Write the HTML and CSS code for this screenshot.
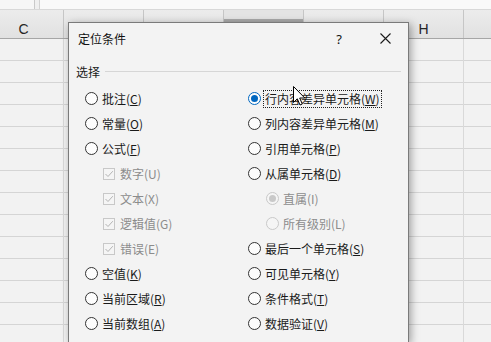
FILE: index.html
```html
<!DOCTYPE html>
<html lang="zh-CN">
<head>
<meta charset="utf-8">
<title>定位条件</title>
<link rel="stylesheet" href="styles.css">
</head>
<body>
<div class="sheet">
  <div class="formula"><span class="namebox"></span><span class="fxsep"></span><span class="fxrest"></span></div>
  <div class="colhead">
    <div class="col">C</div>
    <div class="col"></div>
    <div class="col"></div>
    <div class="col sel"></div>
    <div class="col"></div>
    <div class="col">H</div>
    <div class="col"></div>
  </div>
  <div class="grid">
    <div class="gcol"></div><div class="gcol"></div><div class="gcol"></div><div class="gcol"></div><div class="gcol"></div><div class="gcol"></div><div class="gcol"></div>
  </div>
</div>

<div class="dialog">
  <div class="titlebar">
    <span class="title">定位条件</span>
    <span class="tbtn help">?</span>
    <span class="tbtn close"><svg width="11" height="11" viewBox="0 0 11 11"><path d="M0.5 0.5 L10.5 10.5 M10.5 0.5 L0.5 10.5" stroke="#1a1a1a" stroke-width="1.1" fill="none"/></svg></span>
  </div>
  <div class="grouphead"><span>选择</span><span class="gline"></span></div>
  <div class="options">
    <label class="opt"><span class="radio"></span>批注(<u>C</u>)</label>
    <label class="opt"><span class="radio on"></span><span class="focus">行内容差异单元格(<u>W</u>)</span></label>

    <label class="opt"><span class="radio"></span>常量(<u>O</u>)</label>
    <label class="opt"><span class="radio"></span>列内容差异单元格(<u>M</u>)</label>

    <label class="opt"><span class="radio"></span>公式(<u>F</u>)</label>
    <label class="opt"><span class="radio"></span>引用单元格(<u>P</u>)</label>

    <label class="opt sub dis"><span class="cb"><svg width="10" height="10" viewBox="0 0 10 10"><path d="M1.5 5 L4 7.5 L8.8 2.2" stroke="#b4b4b4" stroke-width="1" fill="none"/></svg></span>数字(U)</label>
    <label class="opt"><span class="radio"></span>从属单元格(<u>D</u>)</label>

    <label class="opt sub dis"><span class="cb"><svg width="10" height="10" viewBox="0 0 10 10"><path d="M1.5 5 L4 7.5 L8.8 2.2" stroke="#b4b4b4" stroke-width="1" fill="none"/></svg></span>文本(X)</label>
    <label class="opt sub dis"><span class="radio on"></span>直属(I)</label>

    <label class="opt sub dis"><span class="cb"><svg width="10" height="10" viewBox="0 0 10 10"><path d="M1.5 5 L4 7.5 L8.8 2.2" stroke="#b4b4b4" stroke-width="1" fill="none"/></svg></span>逻辑值(G)</label>
    <label class="opt sub dis"><span class="radio"></span>所有级别(L)</label>

    <label class="opt sub dis"><span class="cb"><svg width="10" height="10" viewBox="0 0 10 10"><path d="M1.5 5 L4 7.5 L8.8 2.2" stroke="#b4b4b4" stroke-width="1" fill="none"/></svg></span>错误(E)</label>
    <label class="opt"><span class="radio"></span>最后一个单元格(<u>S</u>)</label>

    <label class="opt"><span class="radio"></span>空值(<u>K</u>)</label>
    <label class="opt"><span class="radio"></span>可见单元格(<u>Y</u>)</label>

    <label class="opt"><span class="radio"></span>当前区域(<u>R</u>)</label>
    <label class="opt"><span class="radio"></span>条件格式(<u>T</u>)</label>

    <label class="opt"><span class="radio"></span>当前数组(<u>A</u>)</label>
    <label class="opt"><span class="radio"></span>数据验证(<u>V</u>)</label>
  </div>
</div>

<svg class="cursor" width="13" height="20" viewBox="0 0 13 20"><path d="M0.5 0.5 L0.5 16.5 L4.3 12.8 L7 19 L9.3 18 L6.7 12 L11.8 12 Z" fill="#fff" stroke="#000" stroke-width="1"/></svg>
</body>
</html>
```

FILE: styles.css
```css
* { box-sizing: border-box; }
html, body { margin: 0; padding: 0; }
body {
  width: 491px;
  height: 342px;
  overflow: hidden;
  position: relative;
  background: #f2f2f2;
  font-family: "Noto Sans CJK SC", "Noto Sans", sans-serif;
  font-size: 12px;
  color: #1a1a1a;
}

/* spreadsheet behind */
.sheet { overflow: hidden; height: 342px; }
.formula {
  height: 9px;
  display: flex;
  background: #f6f6f6;
}
.namebox { width: 35px; border-right: 1px solid #c9c9c9; }
.fxsep { width: 5px; border-right: 1px solid #d2d2d2; background: #efefef; }
.fxrest { flex: 1; background: #f9f9f9; }

.colhead {
  height: 30px;
  display: flex;
  margin-left: -16px;
  background: linear-gradient(#ececec, #e1e1e1);
  border-top: 1px solid #d8d8d8;
  border-bottom: 1px solid #a6a6a6;
}
.col {
  width: 80px;
  flex: none;
  border-right: 1px solid #c6c6c6;
  display: flex;
  justify-content: center;
  align-items: flex-end;
  padding-bottom: 0;
  line-height: 18px;
  font-family: "Liberation Sans", Arial, sans-serif;
  font-size: 14px;
  color: #262626;
}
.col.sel {
  background: linear-gradient(to bottom, #e4e4e4 0 9px, #a9a9a9 9px 12px, #d0d0d0 12px);
}

.grid {
  height: 303px;
  display: flex;
  margin-left: -16px;
  background: repeating-linear-gradient(to bottom, transparent 0 21px, #d5d5d5 21px 22px);
}
.gcol {
  width: 80px;
  flex: none;
  border-right: 1px solid #d9d9d9;
}

/* dialog */
.dialog {
  position: absolute;
  left: 68px;
  top: 22px;
  width: 341px;
  height: 320px;
  background: #f3f3f3;
  border: 1px solid #7a7a7a;
  border-bottom: none;
  box-shadow: 2px 2px 8px rgba(0, 0, 0, 0.35);
}
.titlebar {
  height: 31px;
  display: flex;
  align-items: center;
  padding-left: 9px;
}
.title { flex: 1; font-size: 12px; color: #111; }
.tbtn {
  width: 46px;
  height: 31px;
  display: flex;
  align-items: center;
  justify-content: center;
  flex: none;
}
.help { font-family: "Noto Sans", sans-serif; font-size: 13px; color: #111; }

.grouphead {
  display: flex;
  align-items: center;
  height: 16px;
  margin-top: 9px;
  padding-left: 7px;
}
.gline {
  flex: 1;
  height: 1px;
  background: #d6d6d6;
  margin: 0 7px 0 5px;
}

.options {
  margin-top: 7px;
  padding-left: 16px;
  display: grid;
  grid-template-columns: 163px auto;
  grid-auto-rows: 25px;
}
.opt {
  display: flex;
  align-items: center;
  white-space: nowrap;
  line-height: 16px;
}
.opt.sub { padding-left: 18px; }
.opt.dis { color: #8c8c8c; }

.radio {
  width: 13px;
  height: 13px;
  flex: none;
  border: 1px solid #333;
  border-radius: 50%;
  background: #fdfdfd;
  margin-right: 4px;
  display: flex;
  align-items: center;
  justify-content: center;
}
.radio.on { border-color: #0067c0; }
.radio.on::after {
  content: "";
  width: 7px;
  height: 7px;
  border-radius: 50%;
  background: #0067c0;
}
.dis .radio { border-color: #c9c9c9; background: #f5f5f5; }
.dis .radio.on::after { background: #c9c9c9; }

.cb {
  width: 12px;
  height: 12px;
  flex: none;
  border: 1px solid #c8c8c8;
  background: #f5f5f5;
  margin-right: 5px;
  display: flex;
  align-items: center;
  justify-content: center;
}

u { text-decoration: underline; text-underline-offset: 1px; }

.focus {
  border: 1px dotted #222;
  padding: 0 1px;
  line-height: 16px;
  margin-left: -2px;
}

.cursor {
  position: absolute;
  left: 293px;
  top: 86px;
}
```
